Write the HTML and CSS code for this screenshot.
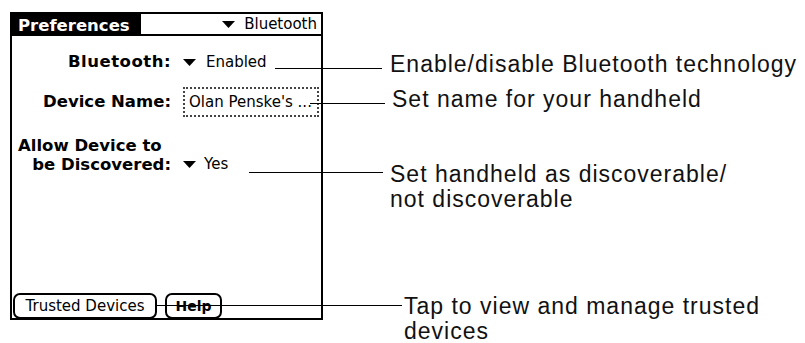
FILE: index.html
```html
<!DOCTYPE html>
<html lang="en">
<head>
    <meta charset="UTF-8">
    <title>Bluetooth Preferences</title>
    <link rel="stylesheet" href="styles.css">
</head>
<body>
    <div class="page">
        <div class="device">
            <div class="titlebar">
                <div class="title-tab">Preferences</div>
                <div class="title-menu">
                    <svg class="tri" width="13" height="7" viewBox="0 0 13 7"><path d="M0 0H13L6.5 7Z"/></svg>Bluetooth
                </div>
            </div>

            <div class="form">
                <div class="row row-bt">
                    <div class="label">Bluetooth:</div>
                    <div class="value">
                        <svg class="tri" width="13" height="7" viewBox="0 0 13 7"><path d="M0 0H13L6.5 7Z"/></svg>Enabled
                    </div>
                </div>
                <div class="row row-name">
                    <div class="label">Device Name:</div>
                    <div class="field">Olan Penske's ...</div>
                </div>
                <div class="label-wrap">Allow Device to</div>
                <div class="row row-disc">
                    <div class="label">be Discovered:</div>
                    <div class="value">
                        <svg class="tri" width="13" height="7" viewBox="0 0 13 7"><path d="M0 0H13L6.5 7Z"/></svg>Yes
                    </div>
                </div>
            </div>

            <div class="buttons">
                <button class="btn btn-trusted">Trusted Devices</button>
                <button class="btn btn-help">Help</button>
            </div>
        </div>

        <!-- callouts sit on top of the handheld screen -->
        <div class="callout c1">
            <span class="leader"></span>
            <span class="note">Enable/disable Bluetooth technology</span>
        </div>
        <div class="callout c2">
            <span class="leader"></span>
            <span class="note">Set name for your handheld</span>
        </div>
        <div class="callout c3">
            <span class="leader"></span>
            <span class="note">Set handheld as discoverable/<br>not discoverable</span>
        </div>
        <div class="callout c4">
            <span class="leader"></span>
            <span class="note">Tap to view and manage trusted<br>devices</span>
        </div>
    </div>
</body>
</html>
```

FILE: styles.css
```css
body {
    margin: 0;
    background: #fff;
    color: #000;
    font-family: "DejaVu Sans", sans-serif;
}
.page {
    position: relative;
    width: 805px;
    height: 343px;
    padding: 12px 0 0 10px;
    box-sizing: border-box;
}
.device {
    width: 313px;
    height: 308px;
    border: 2px solid #000;
    box-sizing: border-box;
    display: flex;
    flex-direction: column;
}
.titlebar {
    display: flex;
    justify-content: space-between;
    height: 20px;
    border-bottom: 2px solid #000;
}
.title-tab {
    width: 129px;
    box-sizing: border-box;
    padding-left: 6px;
    background: #000;
    color: #fff;
    font-weight: bold;
    font-size: 16.5px;
    line-height: 23px;
    height: 20px;
}
.title-menu {
    display: flex;
    align-items: center;
    padding-right: 4px;
    font-size: 15px;
    line-height: 20px;
}
.tri {
    fill: #000;
    margin-right: 9px;
}
.form {
    padding-top: 16px;
}
.row {
    display: grid;
    grid-template-columns: 159px auto;
    column-gap: 12px;
    align-items: center;
}
.label {
    text-align: right;
    font-weight: bold;
    font-size: 16.5px;
    line-height: 20px;
}
.row-bt .label {
    letter-spacing: 0.5px;
}
.value {
    display: flex;
    align-items: center;
    font-size: 15px;
    line-height: 20px;
}
.row-bt .tri {
    margin-right: 10px;
}
.row-name {
    margin-top: 15px;
}
.field {
    width: 136px;
    height: 30px;
    box-sizing: border-box;
    border: 2px dotted #444;
    padding-left: 4px;
    font-size: 15px;
    line-height: 26px;
    white-space: nowrap;
    overflow: hidden;
}
.label-wrap {
    margin-top: 20px;
    padding-left: 6px;
    font-weight: bold;
    font-size: 16.5px;
    line-height: 17px;
}
.row-disc .label {
    line-height: 17px;
}
.row-disc .tri {
    margin-right: 8px;
}
.buttons {
    margin-top: auto;
    margin-bottom: -1px;
    padding-left: 1px;
    display: flex;
    gap: 8px;
}
.btn {
    height: 26px;
    padding: 0;
    border: 2px solid #000;
    border-radius: 7px;
    background: #fff;
    color: #000;
    font-family: "DejaVu Sans", sans-serif;
    font-size: 15px;
}
.btn-trusted {
    width: 144px;
}
.btn-help {
    width: 57px;
    font-weight: bold;
    font-size: 14px;
}
.callout {
    position: absolute;
    display: flex;
    align-items: flex-start;
    font-family: "Liberation Sans", Arial, sans-serif;
    font-size: 23px;
    line-height: 25px;
    letter-spacing: 1px;
    color: #111;
}
.leader {
    display: block;
    height: 1px;
    background: #000;
    flex: none;
}
.c1 { left: 275px; top: 52px; }
.c1 .leader { width: 107px; margin: 16px 8px 0 0; }
.c2 { left: 310px; top: 87px; }
.c2 .leader { width: 75px; margin: 16px 7px 0 0; }
.c3 { left: 249px; top: 162px; }
.c3 .leader { width: 134px; margin: 10px 7px 0 0; }
.c4 { left: 157px; top: 294px; }
.c4 .leader { width: 245px; margin: 11px 2px 0 0; }
```
